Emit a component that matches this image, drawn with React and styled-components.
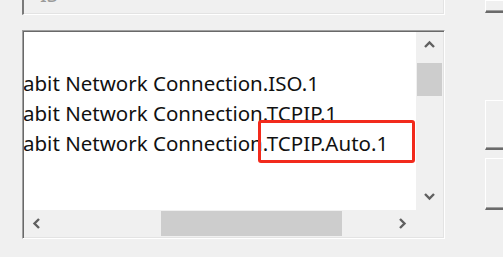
import React from 'react'
import styled, { createGlobalStyle } from 'styled-components'

const GlobalStyle = createGlobalStyle`
	html, body {
		margin: 0;
		padding: 0;
		background: #f0f0f0;
		overflow: hidden;
	}
	body {
		font-family: 'Noto Sans', 'Open Sans', sans-serif;
	}
`

const rows = [
	'abit Network Connection.ISO.1',
	'abit Network Connection.TCPIP.1',
	'abit Network Connection.TCPIP.Auto.1'
]

const Chevron = ({ dir }) => {
	const pts = {
		up: '1,7 5.5,2.5 10,7',
		down: '1,3 5.5,7.5 10,3',
		left: '7,1 2.5,5.5 7,10',
		right: '3,1 7.5,5.5 3,10'
	}[dir]
	return (
		<svg width="11" height="11" viewBox="0 0 11 11">
			<polyline points={pts} fill="none" stroke="#606060" strokeWidth="2.4" />
		</svg>
	)
}

const App = () => {
	return (
		<>
			<GlobalStyle />
			<Page>
				<LeftColumn>
					<TopField>
						<FieldText>IS</FieldText>
					</TopField>
					<ListBox>
						<ListArea>
							{rows.map(row => (
								<Row key={row}>{row}</Row>
							))}
						</ListArea>
						<VScroll>
							<ArrowButton>
								<Chevron dir="up" />
							</ArrowButton>
							<VThumb />
							<Spacer />
							<ArrowButton>
								<Chevron dir="down" />
							</ArrowButton>
						</VScroll>
						<HScroll>
							<ArrowButton>
								<Chevron dir="left" />
							</ArrowButton>
							<HTrack>
								<HThumb />
							</HTrack>
							<ArrowButton>
								<Chevron dir="right" />
							</ArrowButton>
						</HScroll>
						<Corner />
						<Highlight />
					</ListBox>
				</LeftColumn>
				<RightColumn>
					<SideButton height={13} />
					<SideButton height={50} top={87} />
					<SideButton height={52} top={8} />
				</RightColumn>
			</Page>
		</>
	)
}

export default App

const Page = styled.div`
	width: 503px;
	height: 257px;
	display: flex;
	align-items: flex-start;
	padding-left: 22px;
	box-sizing: border-box;
	overflow: hidden;
`

const LeftColumn = styled.div`
	flex: none;
	width: 423px;
	display: flex;
	flex-direction: column;
	gap: 15px;
`

const TopField = styled.div`
	height: 15px;
	box-sizing: border-box;
	border-left: 2px solid #7a7a7a;
	border-bottom: 1px solid #ffffff;
	border-right: 1px solid #ffffff;
	box-shadow: inset -1px -1px 0 #e3e3e3;
	display: flex;
	align-items: flex-end;
	overflow: hidden;
	padding-left: 16px;
`

const FieldText = styled.span`
	font-size: 20px;
	color: #9a9a9a;
	line-height: 20px;
	margin-bottom: 9px;
`

const ListBox = styled.div`
	position: relative;
	height: 209px;
	box-sizing: border-box;
	border-top: 1px solid #a0a0a0;
	border-left: 1px solid #a0a0a0;
	border-right: 1px solid #ffffff;
	border-bottom: 1px solid #ffffff;
	box-shadow: inset 1px 1px 0 #696969, inset -1px -1px 0 #e3e3e3;
	padding: 1px;
	display: grid;
	grid-template-columns: 1fr 27px;
	grid-template-rows: 1fr 27px;
`

const ListArea = styled.div`
	background: #ffffff;
	overflow: hidden;
	padding-top: 36px;
`

const Row = styled.div`
	font-size: 20.5px;
	line-height: 30px;
	height: 30px;
	color: #111;
	white-space: nowrap;
	margin-left: -1px;
`

const Highlight = styled.div`
	position: absolute;
	left: 235px;
	top: 89px;
	width: 157px;
	height: 43px;
	border: 3px solid #f22a1c;
	border-radius: 3px;
	box-sizing: border-box;
`

const VScroll = styled.div`
	background: #f0f0f0;
	display: flex;
	flex-direction: column;
`

const HScroll = styled.div`
	background: #f0f0f0;
	display: flex;
`

const ArrowButton = styled.div`
	width: 27px;
	height: 27px;
	flex: none;
	display: flex;
	align-items: center;
	justify-content: center;
`

const VThumb = styled.div`
	height: 33px;
	margin: 4px 1px 0;
	background: #cdcdcd;
`

const Spacer = styled.div`
	flex: 1;
`

const HTrack = styled.div`
	flex: 1;
	display: flex;
	align-items: center;
	padding-left: 110px;
`

const HThumb = styled.div`
	width: 181px;
	height: 25px;
	background: #cdcdcd;
`

const Corner = styled.div`
	background: #f0f0f0;
`

const RightColumn = styled.div`
	flex: none;
	margin-left: 40px;
	width: 40px;
	display: flex;
	flex-direction: column;
`

const SideButton = styled.div`
	height: ${p => p.height}px;
	margin-top: ${p => p.top || 0}px;
	box-sizing: border-box;
	background: #f0f0f0;
	border-top: 1px solid #ffffff;
	border-left: 1px solid #ffffff;
	border-bottom: 2px solid #6a6a6a;
	box-shadow: inset 0 -1px 0 #a0a0a0;
	flex: none;
`
